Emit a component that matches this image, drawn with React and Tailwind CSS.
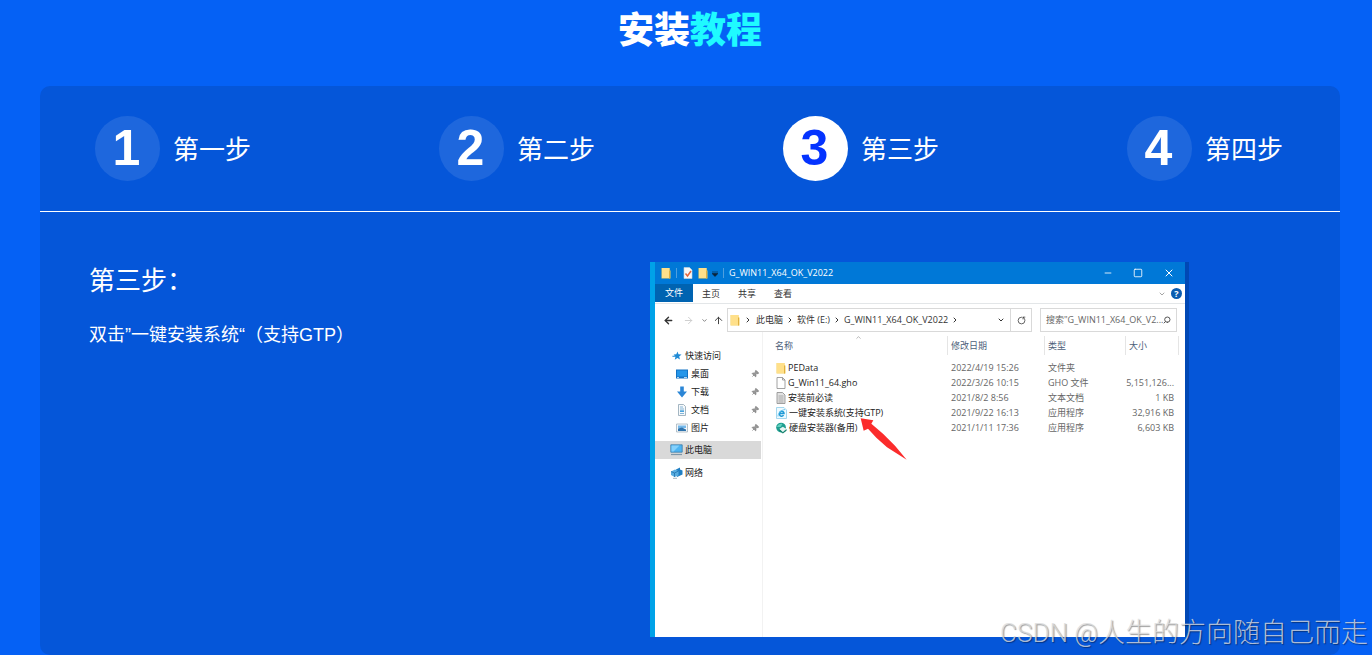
import { useState } from "react";
import {
  ArrowLeft,
  ArrowRight,
  ArrowUp,
  ChevronDown,
  ChevronRight,
  ChevronUp,
  Minus,
  Pin,
  RotateCcw,
  Search,
  Square,
  X,
} from "lucide-react";

const STEPS = [
  { number: 1, label: "第一步" },
  { number: 2, label: "第二步" },
  { number: 3, label: "第三步" },
  { number: 4, label: "第四步" },
];

const FILES = [
  { icon: FolderIcon, name: "PEData", date: "2022/4/19 15:26", type: "文件夹", size: "" },
  { icon: FileIcon, name: "G_Win11_64.gho", date: "2022/3/26 10:15", type: "GHO 文件", size: "5,151,126..." },
  { icon: TextIcon, name: "安装前必读", date: "2021/8/2 8:56", type: "文本文档", size: "1 KB" },
  { icon: SetupIcon, name: "一键安装系统(支持GTP)", date: "2021/9/22 16:13", type: "应用程序", size: "32,916 KB", marked: true },
  { icon: DiskIcon, name: "硬盘安装器(备用)", date: "2021/1/11 17:36", type: "应用程序", size: "6,603 KB" },
];

const PLACES = [
  { icon: DesktopIcon, label: "桌面" },
  { icon: DownloadIcon, label: "下载" },
  { icon: DocumentIcon, label: "文档" },
  { icon: PictureIcon, label: "图片" },
];

function FolderIcon() {
  return (
    <svg viewBox="0 0 10 12" className="w-[10px] h-3 shrink-0">
      <path d="M0.5 1h8v2.500h1v8h-9z" fill="#f5cf5c" />
      <path d="M1 1h7.500v10H1z" fill="#ffe08a" />
      <path d="M8.500 3.500v8" stroke="#e0b040" strokeWidth="1" />
    </svg>
  );
}

function FileIcon() {
  return (
    <svg viewBox="0 0 10 12" className="w-[10px] h-3 shrink-0">
      <path d="M1 .5h5.500l2.500 2.500v8.500H1zM6.500.5V3H9" fill="#fff" stroke="#8c8c8c" strokeWidth=".8" />
    </svg>
  );
}

function TextIcon() {
  return (
    <svg viewBox="0 0 10 12" className="w-[10px] h-3 shrink-0">
      <path d="M1 .5h5.500l2.500 2.500v8.500H1z" fill="#e2e2e2" stroke="#8c8c8c" strokeWidth=".8" />
      <path d="M2.500 4h5M2.500 6h5M2.500 8h5M2.500 10h5" stroke="#909090" strokeWidth=".7" />
    </svg>
  );
}

function SetupIcon() {
  return (
    <svg viewBox="0 0 11 12" className="w-[11px] h-3 shrink-0">
      <path d="M.5.5h7.500l2.500 2.500v8.500H.5z" fill="#eefaff" stroke="#8fcdea" strokeWidth=".8" />
      <path d="M3 6.500h5c0-3-4.500-3-4.500.5 0 2.500 3 3 4 1" fill="none" stroke="#1f9ad6" strokeWidth="1.500" />
      <path d="M2 9.500C2 6 5 3 9 2.500" fill="none" stroke="#5bbce8" strokeWidth=".8" />
    </svg>
  );
}

function DiskIcon() {
  return (
    <svg viewBox="0 0 12 12" className="w-[11px] h-3 shrink-0">
      <circle cx="5.500" cy="5.500" r="5.300" fill="#1f9e90" />
      <path d="M1 5c1-3 4-4 6-3.500L5 5z" fill="#62d0bf" />
      <path d="M3.500 7l4-2.500L11.500 7l-4 3.500z" fill="#e8f4f2" />
      <path d="M3.500 7l4 3.500V12l-4-3zM11.500 7l-4 3.500V12l4-3z" fill="#12806c" />
    </svg>
  );
}

function StarIcon() {
  return (
    <svg viewBox="0 0 12 12" className="w-[10px] h-[10px] shrink-0">
      <path d="M6.500.5l1.300 3.500 3.700.2-2.900 2.300 1 3.800-3.100-2-3.200 2.200L4.200 7H.5V5.700h2.800L2 4.200 5.200 4z" fill="#1e8ad6" />
    </svg>
  );
}

function DesktopIcon() {
  return (
    <svg viewBox="0 0 12 10" className="w-3 h-[10px] shrink-0">
      <path d="M0 .5h12v9H0z" fill="#1272c4" />
      <path d="M1 1.500h10v6H1z" fill="#2496ea" />
      <path d="M1 8.500h2M8 8.500h3" stroke="#fff" strokeWidth=".7" />
    </svg>
  );
}

function DownloadIcon() {
  return (
    <svg viewBox="0 0 12 12" className="w-3 h-3 shrink-0">
      <path d="M4.200.5h3.600v5h3.200L6 11.500 1 5.500h3.200z" fill="#2b86d6" />
    </svg>
  );
}

function DocumentIcon() {
  return (
    <svg viewBox="0 0 12 12" className="w-3 h-3 shrink-0">
      <path d="M2.500.5h5l2 2v9h-7z" fill="#f6f9fb" stroke="#8ea3b3" strokeWidth=".8" />
      <path d="M4 3h3M4 5h4M4 9.500h4" stroke="#6aa5cf" strokeWidth=".8" />
      <path d="M4 6.300h4v1.700H4z" fill="#4aa2dc" />
    </svg>
  );
}

function PictureIcon() {
  return (
    <svg viewBox="0 0 12 10" className="w-3 h-[10px] shrink-0">
      <path d="M.5 1h11v8H.5z" fill="#f4f8fb" stroke="#9aaab6" strokeWidth=".7" />
      <path d="M2 2.500h8v2.500H2z" fill="#74b8ea" />
      <path d="M2 5.500l4-1 4 2V8H2z" fill="#2f74ae" />
    </svg>
  );
}

function ComputerIcon() {
  return (
    <svg viewBox="0 0 13 12" className="w-[13px] h-3 shrink-0">
      <path d="M.8.8h11.400v7.400H.8z" fill="#4db4f2" stroke="#3b7ca8" strokeWidth=".8" />
      <path d="M1.500 1.500h8l-6 6h-2z" fill="#84d0fb" />
      <path d="M1 10.500h11" stroke="#7f97a8" strokeWidth="1.200" />
    </svg>
  );
}

function NetworkIcon() {
  return (
    <svg viewBox="0 0 13 12" className="w-[13px] h-3 shrink-0">
      <path d="M6 2.500L10 .5v2l2.500 1v4L7 10z" fill="#1f7fc4" />
      <path d="M1 4.500l4-2 3.500 1.500v4.500L4.500 10 1 8z" fill="#58ade0" />
      <path d="M1 4.500L4.500 6l4-2M4.500 6v4" fill="none" stroke="#1c6ca8" strokeWidth=".7" />
      <path d="M3 11.300h4" stroke="#a5b4be" strokeWidth="1" />
    </svg>
  );
}

function CheckedDocIcon() {
  return (
    <svg viewBox="0 0 10 12" className="w-[10px] h-3 shrink-0">
      <path d="M1 .5h5.500L9 3v8.500H1z" fill="#f7f7f7" stroke="#c5d3de" strokeWidth=".6" />
      <path d="M2.500 6.500L4.500 9 8 4" fill="none" stroke="#e2643b" strokeWidth="1.500" />
    </svg>
  );
}

function RedArrow() {
  return (
    <svg viewBox="0 0 144 132" className="absolute left-[83px] top-3 w-12 h-11 z-10">
      <path d="M5 4L43 10 37 20 72 50 108 86 143 128 84 91 52 62 27 35 14 41z" fill="#fb2c2c" />
    </svg>
  );
}

function TitleBar() {
  return (
    <div className="h-[22px] flex items-center bg-[#0078d7] text-white pl-[6px] pr-[10px]">
      <FolderIcon />
      <span className="w-px h-[10px] bg-[#4f9fdf] ml-[5px] mr-[6px]" />
      <CheckedDocIcon />
      <span className="ml-[5px] flex">
        <FolderIcon />
      </span>
      <svg viewBox="0 0 6 6" className="w-[6px] h-[6px] ml-1 mt-px">
        <path d="M0 1h6M0 2.500h6L3 5.500z" fill="#0b2239" stroke="#0b2239" strokeWidth=".6" />
      </svg>
      <span className="w-px h-[10px] bg-[#4f9fdf] mx-[5px]" />
      <span className="flex-1 whitespace-nowrap">G_WIN11_X64_OK_V2022</span>
      <div className="flex gap-[20px] items-center">
        <button aria-label="最小化"><Minus className="w-[10px] h-[10px]" /></button>
        <button aria-label="最大化"><Square className="w-[10px] h-[10px]" /></button>
        <button aria-label="关闭"><X className="w-3 h-3" /></button>
      </div>
    </div>
  );
}

function MenuBar() {
  return (
    <div className="h-5 flex items-center border-b border-[#e3e6e8] text-[#333]">
      <button className="w-[38px] h-[18px] bg-[#0063b1] text-white mb-px">文件</button>
      <button className="w-9">主页</button>
      <button className="w-9">共享</button>
      <button className="w-9">查看</button>
      <ChevronDown className="w-2 h-2 ml-auto text-[#777]" />
      <button aria-label="帮助" className="w-[11px] h-[11px] ml-[5px] mr-[3px] rounded-full bg-[#0a5cb0] text-white font-bold leading-[11px]">
        ?
      </button>
    </div>
  );
}

function AddressBar() {
  return (
    <div className="flex items-center pt-1 pl-2 pr-2 text-[#333]">
      <ArrowLeft strokeWidth={3} className="w-[11px] h-[11px]" />
      <ArrowRight className="w-[11px] h-[11px] ml-[9px] text-[#ccc]" />
      <ChevronDown strokeWidth={3} className="w-[7px] h-[7px] ml-[7px] text-[#777]" />
      <ArrowUp className="w-[11px] h-[11px] ml-[5px]" />
      <div className="flex-1 h-6 ml-[3px] pl-[2px] flex items-center border border-[#d9d9d9] whitespace-nowrap">
        <FolderIcon />
        <ChevronRight strokeWidth={3} className="w-2 h-2 mx-1" />
        <span>此电脑</span>
        <ChevronRight strokeWidth={3} className="w-2 h-2 mx-[3px]" />
        <span>软件 (E:)</span>
        <ChevronRight strokeWidth={3} className="w-2 h-2 mx-[3px]" />
        <span>G_WIN11_X64_OK_V2022</span>
        <ChevronRight strokeWidth={3} className="w-2 h-2 ml-[3px]" />
        <ChevronDown strokeWidth={3} className="w-2 h-2 ml-auto mr-[5px]" />
        <button aria-label="刷新" className="h-full w-[21px] flex items-center justify-center border-l border-[#d9d9d9]">
          <RotateCcw className="w-[9px] h-[9px] rotate-90" />
        </button>
      </div>
      <label className="w-[137px] h-6 ml-2 px-[5px] flex items-center border border-[#d9d9d9]">
        <input
          type="text"
          aria-label="搜索"
          placeholder={'搜索"G_WIN11_X64_OK_V2...'}
          className="flex-1 min-w-0 outline-none placeholder:text-[#666]"
        />
        <Search strokeWidth={3} className="w-2 h-2 shrink-0 rotate-90 text-[#555]" />
      </label>
    </div>
  );
}

function Places() {
  return (
    <nav className="w-[108px] shrink-0 pt-[15px] border-r border-[#f2f2f2] text-[#222]">
      <div className="h-[18px] flex items-center gap-[3px] pl-[17px]">
        <StarIcon />
        快速访问
      </div>
      {PLACES.map(({ icon: Icon, label }) => (
        <div key={label} className="h-[18px] flex items-center gap-[3px] pl-[21px] pr-[3px]">
          <Icon />
          {label}
          <Pin className="w-2 h-2 ml-auto rotate-45 text-[#777] fill-[#999]" />
        </div>
      ))}
      <div className="h-[18px] mt-1 mr-px flex items-center gap-[2px] pl-[15px] bg-[#d9d9d9]">
        <ComputerIcon />
        此电脑
      </div>
      <div className="h-[18px] mt-[5px] flex items-center gap-[2px] pl-[15px]">
        <NetworkIcon />
        网络
      </div>
    </nav>
  );
}

function FileTable() {
  return (
    <div className="flex-1 pt-1 pr-[6px] relative">
      <ChevronUp className="absolute left-[92px] top-[2px] w-[7px] h-[7px] text-[#888]" />
      <table className="w-full table-fixed border-collapse text-left whitespace-nowrap text-[#666]">
        <thead>
          <tr className="h-6 align-top text-[#4c607a]">
            <th className="font-normal p-0">
              <div className="h-[19px] leading-[19px] pl-3">名称</div>
            </th>
            <th className="w-[97px] font-normal p-0">
              <div className="h-[19px] leading-[19px] pl-[3px] border-l border-[#e5e5e5]">修改日期</div>
            </th>
            <th className="w-[81px] font-normal p-0">
              <div className="h-[19px] leading-[19px] pl-[3px] border-l border-[#e5e5e5]">类型</div>
            </th>
            <th className="w-[54px] font-normal p-0">
              <div className="h-[19px] leading-[19px] pl-[3px] border-x border-[#e5e5e5]">大小</div>
            </th>
          </tr>
        </thead>
        <tbody className="leading-[15px]">
          {FILES.map(({ icon: Icon, name, date, type, size, marked }) => (
            <tr key={name} className="h-[15px]">
              <td className="p-0 text-[#222]">
                <div className="relative ml-[13px] h-[15px] flex items-center gap-[2px]">
                  <Icon />
                  {name}
                  {marked && <RedArrow />}
                </div>
              </td>
              <td className="p-0 pl-1">{date}</td>
              <td className="p-0 pl-1">{type}</td>
              <td className="p-0 pr-[5px] text-right">{size}</td>
            </tr>
          ))}
        </tbody>
      </table>
    </div>
  );
}

function ExplorerWindow() {
  return (
    <div className="min-h-[375px] flex flex-col bg-white border-l-[5px] border-l-[#00a2e8] border-r-[4px] border-r-[#0048b5] text-[9px] leading-3 font-['Open_Sans','Noto_Sans_CJK_SC',sans-serif]">
      <TitleBar />
      <MenuBar />
      <AddressBar />
      <div className="flex-1 flex">
        <Places />
        <FileTable />
      </div>
    </div>
  );
}

export default function App() {
  const [active, setActive] = useState(3);

  return (
    <div className="relative min-h-screen pl-10 pr-8 bg-[#0561f5] text-white font-['Liberation_Sans','Noto_Sans_CJK_SC',sans-serif]">
      <h1 className="pt-[6px] text-center text-4xl leading-[50px] font-black">
        安装<span className="text-[#1ffaff]">教程</span>
      </h1>

      <section className="mt-[30px] rounded-[10px] bg-[#0556d9]">
        {/* Step tabs */}
        <div className="flex justify-between pl-[55px] pr-[57px] py-[30px] border-b border-white">
          {STEPS.map(({ number, label }) => (
            <button
              key={number}
              onClick={() => setActive(number)}
              className="flex items-center gap-[13px] text-[26px] leading-[39px]"
            >
              <span
                className={`w-[65px] h-[65px] rounded-full text-[50px] leading-[65px] font-bold text-center pr-[2px]
                  ${active === number ? "bg-white text-[#0433ff]" : "bg-white/10 text-white"}`}
              >
                {number}
              </span>
              <span className="pt-1">{label}</span>
            </button>
          ))}
        </div>

        {/* Step content */}
        <div className="grid grid-cols-[561fr_539fr] pl-[49px] pr-[151px] pt-[50px] pb-[18px] [text-spacing-trim:space-all]">
          <div>
            <h2 className="text-[26px] leading-[38px]">第三步：</h2>
            <p className="mt-[22px] text-lg leading-[27px]">双击”一键安装系统“（支持GTP）</p>
          </div>
          <ExplorerWindow />
        </div>
      </section>

      {/* Watermark */}
      <div className="absolute right-1 bottom-1 text-[27px] leading-9 font-light whitespace-nowrap text-[#dcdcdc]/80 [text-shadow:1px_1px_1px_rgb(0_0_0/0.4)] pointer-events-none font-['Roboto','Noto_Sans_CJK_SC',sans-serif]">
        <span className="text-[26px]">CSDN @</span>人生的方向随自己而走
      </div>
    </div>
  );
}
